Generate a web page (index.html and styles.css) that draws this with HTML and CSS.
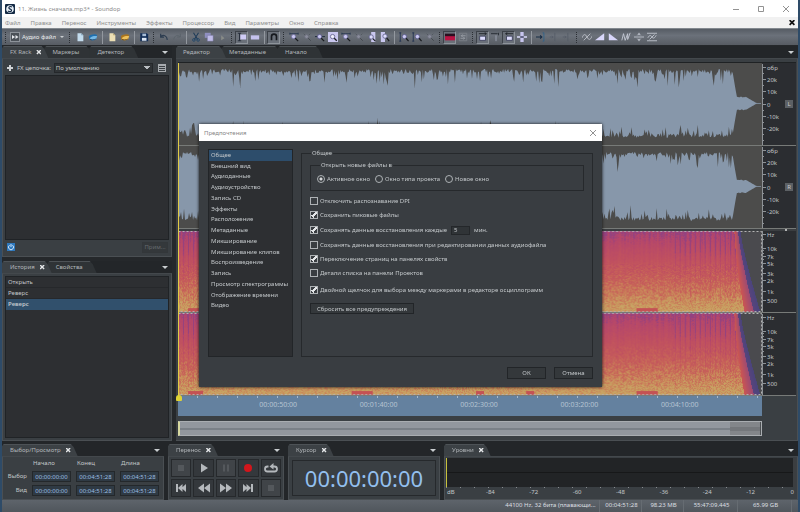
FILE: index.html
```html
<!DOCTYPE html>
<html lang="ru">
<head>
<meta charset="utf-8">
<title>11. Жизнь сначала.mp3* - Soundop</title>
<link rel="stylesheet" href="styles.css">
</head>
<body>
<svg class="sprite" aria-hidden="true">
  <symbol id="i-new" viewBox="0 0 12 12"><path d="M3 1.500h4.500L10 4v7H3z" fill="#c3dcee"/><path d="M7.500 1.500V4H10z" fill="#7f9db3"/></symbol>
  <symbol id="i-open" viewBox="0 0 12 12"><path d="M1 5c2-2 8-3 10-1.500L9.500 9C7 10.500 3 10 1.500 9z" fill="#1f6fae"/><path d="M2 7.500C4 5 8 4.500 11 5L9.500 9c-2 1.200-5 1.200-7.500 0z" fill="#74b7e4"/><path d="M2 8.500c2 1.200 5 1.200 7.500 0" stroke="#123a60" fill="none"/></symbol>
  <symbol id="i-newp" viewBox="0 0 12 12"><path d="M3 1.500h4.500L10 4v7H3z" fill="#ecdfb4"/><path d="M7.500 1.500V4H10z" fill="#ad9b66"/></symbol>
  <symbol id="i-openp" viewBox="0 0 12 12"><path d="M1 5c2-2 8-3 10-1.500L9.500 9C7 10.500 3 10 1.500 9z" fill="#a87420"/><path d="M2 7.500C4 5 8 4.500 11 5L9.500 9c-2 1.200-5 1.200-7.500 0z" fill="#eec05a"/><path d="M2 8.500c2 1.200 5 1.200 7.500 0" stroke="#5b3d12" fill="none"/></symbol>
  <symbol id="i-save" viewBox="0 0 12 12"><path d="M1.500 1.500h8l1.500 1.500v8H1.500z" fill="#122e57"/><path d="M4 2h4.500v3H4z" fill="#a8bdd6"/><path d="M3.500 7h5.500v3.500H3.500z" fill="#dce6f2"/></symbol>
  <symbol id="i-undo" viewBox="0 0 12 12"><path d="M2 2v4h4M2.500 5.500C5 3 9.500 4 10 9.500" stroke="#2d3d50" stroke-width="1.500" fill="none"/></symbol>
  <symbol id="i-redo" viewBox="0 0 12 12"><path d="M10 2v4H6M9.500 5.500C7 3 3 4 2 9" stroke="#596169" fill="none"/></symbol>
  <symbol id="i-cut" viewBox="0 0 12 12"><path d="M3 1l5 8M9 1L4 9" stroke="#1f3b58" stroke-width="1.300"/><circle cx="3.500" cy="9.500" r="1.600" fill="none" stroke="#1c4368"/><circle cx="8.500" cy="9.500" r="1.600" fill="none" stroke="#1c4368"/></symbol>
  <symbol id="i-copy" viewBox="0 0 12 12"><path d="M1 1h7v6H1z" fill="#8f8fc0"/><path d="M4 4h7v7H4z" fill="#bfbce8" stroke="#6a6a96" stroke-width=".5"/></symbol>
  <symbol id="i-paste" viewBox="0 0 12 12"><path d="M5 4l4 3.500L5 10z" fill="#898c88"/></symbol>
  <symbol id="i-range" viewBox="0 0 12 12"><path d="M1 1.500h4M3 1.500v9M1 10.500h4" stroke="#1b2230" fill="none"/><path d="M4 3h7v6H4z" fill="#cfccf6"/></symbol>
  <symbol id="i-block" viewBox="0 0 12 12"><path d="M1 4h10v5H1z" fill="#c4c2ee"/></symbol>
  <symbol id="i-magnet" viewBox="0 0 12 12"><path d="M3 10V5.500a3 3 0 0 1 6 0V10" stroke="#16191e" stroke-width="2" fill="none"/></symbol>
  <symbol id="i-zoom" viewBox="0 0 12 12"><path d="M1 2h10M1 .800v2.400M11 .800v2.400" stroke="#26364e"/><circle cx="5.500" cy="5.500" r="2.600" fill="#c9c7ef" stroke="#6c6c9c"/><path d="M7.500 7.500L11 11" stroke="#17191d" stroke-width="1.400"/></symbol>
  <symbol id="i-zoomh" viewBox="0 0 12 12"><path d="M0 5.500h12" stroke="#222d40" stroke-width="1.200"/><circle cx="5.500" cy="5.500" r="2.600" fill="#c9c7ef" stroke="#5c5c8c"/><path d="M7.500 7.500L11 11" stroke="#17191d" stroke-width="1.400"/></symbol>
  <symbol id="i-zoomsel" viewBox="0 0 12 12"><path d="M0 0h12v12H0z" fill="#c9c7ef"/><circle cx="5.500" cy="5.500" r="2.600" fill="#eeeefc" stroke="#5f5f8c"/><path d="M7.500 7.500L10.500 10.500" stroke="#17191d" stroke-width="1.400"/></symbol>
  <symbol id="i-zooml" viewBox="0 0 12 12"><path d="M5 0h5v12H5z" fill="#c9c7ef"/><circle cx="5" cy="6" r="2.600" fill="#dcdcfa" stroke="#5f5f8c"/><path d="M7 8l3 3" stroke="#17191d" stroke-width="1.400"/></symbol>
  <symbol id="i-zoomr" viewBox="0 0 12 12"><path d="M1 0h5v12H1z" fill="#c9c7ef"/><circle cx="6" cy="5" r="2.600" fill="#dcdcfa" stroke="#5f5f8c"/><path d="M8 7l3 4" stroke="#17191d" stroke-width="1.400"/></symbol>
  <symbol id="i-zoomv" viewBox="0 0 12 12"><path d="M1.500 1v10M.300 1h2.400M.300 11h2.400" stroke="#1d2e4d"/><circle cx="6.500" cy="5.500" r="2.600" fill="#c9c7ef" stroke="#5c5c8c"/><path d="M8.500 7.500L11.500 11" stroke="#17191d" stroke-width="1.400"/></symbol>
  <symbol id="i-zoomoff" viewBox="0 0 12 12"><path d="M2 2l2 2M10 2L8 4" stroke="#51575e"/><circle cx="5.500" cy="5.500" r="2.300" fill="#8a8d9c" stroke="#6b6e7c"/><path d="M7.500 7.500L10.500 10.500" stroke="#43484f" stroke-width="1.200"/></symbol>
  <symbol id="i-spec" viewBox="0 0 12 12"><path d="M0 2h12v4H0z" fill="#2a1020"/><path d="M0 5h12v5H0z" fill="#b81443"/></symbol>
  <symbol id="i-swap" viewBox="0 0 12 12"><path d="M1.500 1.500h9v9h-9z" fill="none" stroke="#7d828a"/><path d="M9 4.500H4M5.500 3L4 4.500 5.500 6M3 7.500h5M6.500 6L8 7.500 6.500 9" stroke="#9ea2aa" fill="none"/></symbol>
  <symbol id="i-boxr" viewBox="0 0 12 12"><path d="M1 2h9M8 .500L10 2 8 3.500" stroke="#1a1e24" fill="none"/><path d="M2 5h7v5H2z" fill="#dcdcfc" stroke="#363a55"/></symbol>
  <symbol id="i-boxl" viewBox="0 0 12 12"><path d="M11 2H2M4 .500L2 2l2 1.500" stroke="#1a1e24" fill="none"/><path d="M3 5h7v5H3z" fill="#dcdcfc" stroke="#363a55"/></symbol>
  <symbol id="i-tee" viewBox="0 0 12 12"><path d="M0 2h8M9 1v3" stroke="#20252d" fill="none"/><path d="M6 4v7" stroke="#a3a9ba"/></symbol>
  <symbol id="i-cross" viewBox="0 0 12 12"><path d="M4 0h4v12H4z" fill="#c7c5ee"/><path d="M0 6h4M8 6h4" stroke="#dcdcfc" stroke-width="2"/><path d="M4 6h4" stroke="#252b45" stroke-width="1.500"/></symbol>
  <symbol id="i-toend" viewBox="0 0 12 12"><path d="M0 6h7M5 4l2 2-2 2" stroke="#172c44" stroke-width="1.300" fill="none"/><path d="M8 1h1.500v10H8" stroke="#2c618b" fill="none"/></symbol>
  <symbol id="i-dim" viewBox="0 0 12 12"><path d="M1 6h4M3.500 4.500L5 6 3.500 7.500M7 1v10" stroke="#555c68" fill="none"/></symbol>
  <symbol id="i-wavy" viewBox="0 0 12 12"><path d="M0 7c2-5 4-5 6-1s4 4 6-1M2 10l8-8" stroke="#c4c8d0" fill="none"/></symbol>
  <symbol id="i-fin" viewBox="0 0 12 12"><path d="M0 10L11 1.500V10z" fill="#d8d6fa"/></symbol>
  <symbol id="i-fout" viewBox="0 0 12 12"><path d="M1 1.500L12 10H1z" fill="#d8d6fa"/></symbol>
  <symbol id="i-nn" viewBox="0 0 12 12"><path d="M1 10l2-8 2 8 3-8 0 7 3-8" stroke="#c4c8d4" stroke-width="1.100" fill="none"/></symbol>
  <symbol id="i-plusm" viewBox="0 0 12 12"><path d="M0 6h12M6 1v3M6 8v3M4 4l2-2 2 2M4 8l2 2 2-2" stroke="#c8ccd6" fill="none"/></symbol>
  <symbol id="i-norm" viewBox="0 0 12 12"><path d="M0 1.500h12M0 10.500h12M1 7c2-4 4-3 5-1s3 2 5-2M3 9l6-6" stroke="#c8ccd6" fill="none"/></symbol>
</svg>

<div class="app">
  <header class="titlebar">
    <svg class="logo" viewBox="0 0 10 10"><rect width="10" height="10" rx="1" fill="#142a44"/><circle cx="5" cy="5" r="3.800" fill="#e6eef5"/><path d="M7 3C5 1.800 3.500 3 4 4.200s3 .800 2.500 2.400S4 7.800 3 7" fill="none" stroke="#142a44" stroke-width="1.200"/></svg>
    <span class="title">11. Жизнь сначала.mp3* - Soundop</span>
    <div class="winbtns">
      <button aria-label="Свернуть"><svg viewBox="0 0 8 8"><path d="M1 4.500h6"/></svg></button>
      <button aria-label="Развернуть"><svg viewBox="0 0 8 8"><path d="M1.500 1.500h5v5h-5z"/></svg></button>
      <button aria-label="Закрыть"><svg viewBox="0 0 8 8"><path d="M1 1l6 6M7 1L1 7"/></svg></button>
    </div>
  </header>
  <nav class="menubar">
    <a href="#">Файл</a><a href="#">Правка</a><a href="#">Перенос</a><a href="#">Инструменты</a><a href="#">Эффекты</a><a href="#">Процессор</a><a href="#">Вид</a><a href="#">Параметры</a><a href="#">Окно</a><a href="#">Справка</a>
    <button class="docclose" aria-label="Закрыть документ"><i class="x"></i></button>
  </nav>
  <div class="toolbar" id="toolbar">
    <i class="grip"></i>
    <button class="mode"><svg viewBox="0 0 10 10"><rect x=".500" y=".500" width="9" height="9" fill="#4b5158" stroke="#8d939a"/><path d="M2 3l3 2-3 2zM5.500 3l3 2-3 2z" fill="#e7eaee"/></svg>Аудио файл<b class="caret"></b></button>
  </div>

  <main class="work">
    <aside class="side">
      <section class="panel rack">
        <div class="tabs"><button class="tab on">FX Rack<i class="x"></i></button><button class="tab">Маркеры</button><button class="tab">Детектор</button><b class="caret"></b></div>
        <div class="body">
          <div class="chain">
            <button class="plus" aria-label="Добавить"></button>
            <label for="chain">FX цепочка:</label>
            <select id="chain"><option>По умолчанию</option></select>
            <button class="lines" aria-label="Список"></button>
          </div>
          <div class="well"></div>
          <div class="foot">
            <button class="power" aria-label="Питание"><svg viewBox="0 0 8 8"><path d="M2.500 2.200a2.500 2.500 0 1 0 3 0M4 1v3" fill="none" stroke="#cfe4f8"/></svg></button>
            <button class="btn apply" disabled>Прим...</button>
          </div>
        </div>
      </section>
      <section class="panel history">
        <div class="tabs"><button class="tab on">История<i class="x"></i></button><button class="tab">Свойства</button><b class="caret"></b></div>
        <div class="body"><ul class="log"><li>Открыть</li><li>Реверс</li><li class="sel">Реверс</li></ul></div>
      </section>
    </aside>

    <section class="panel editor">
      <div class="tabs"><button class="tab on wide">Редактор</button><button class="tab wide">Метаданные</button><button class="tab wide">Начало</button><b class="caret"></b></div>
      <div class="body">
        <div class="tracks">
          <div class="track"><svg class="wave" viewBox="0 0 582 83" preserveAspectRatio="none"></svg><div class="axis"><svg class="amp"></svg><span class="chan">L</span></div></div>
          <div class="track"><svg class="wave" viewBox="0 0 582 83" preserveAspectRatio="none"></svg><div class="axis"><svg class="amp"></svg><span class="chan">R</span></div></div>
          <div class="split"><i></i></div>
          <div class="track"><canvas class="spec" width="582" height="83"></canvas><div class="axis"><svg class="freq"></svg></div></div>
          <div class="track"><canvas class="spec" width="582" height="83"></canvas><div class="axis"><svg class="freq"></svg></div></div>
          <i class="playhead"></i>
        </div>
        <div class="ruler"><span>00:00:50:00</span><span>00:01:40:00</span><span>00:02:30:00</span><span>00:03:20:00</span><span>00:04:10:00</span></div>
        <div class="overview"><i></i></div>
      </div>
    </section>
  </main>

  <div class="dock">
    <section class="panel selection">
      <div class="tabs"><button class="tab on">Выбор/Просмотр<i class="x"></i></button><b class="caret"></b></div>
      <div class="body times">
        <span></span><span>Начало</span><span>Конец</span><span>Длина</span>
        <label for="s1">Выбор</label><input id="s1" value="00:00:00:00"><input aria-label="Выбор, конец" value="00:04:51:28"><input aria-label="Выбор, длина" value="00:04:51:28">
        <label for="v1">Вид</label><input id="v1" value="00:00:00:00"><input aria-label="Вид, конец" value="00:04:51:28"><input aria-label="Вид, длина" value="00:04:51:28">
      </div>
    </section>
    <section class="panel transport">
      <div class="tabs"><button class="tab on">Перенос<i class="x"></i></button><b class="caret"></b></div>
      <div class="body keys">
        <button class="off" aria-label="Стоп"><svg viewBox="0 0 14 12"><path d="M4 3h6v6H4z"/></svg></button>
        <button aria-label="Играть"><svg viewBox="0 0 14 12"><path d="M4 1.500L11 6l-7 4.500z"/></svg></button>
        <button class="off" aria-label="Пауза"><svg viewBox="0 0 14 12"><path d="M4 2.500h2v7H4zM8 2.500h2v7H8z"/></svg></button>
        <button aria-label="Запись"><svg viewBox="0 0 14 12"><circle cx="7" cy="6" r="4" fill="#d2161c"/></svg></button>
        <button aria-label="Цикл"><svg viewBox="0 0 14 12"><path d="M4.500 4.500H3.500a2.300 2.300 0 0 0 0 5h7a2.300 2.300 0 0 0 0-5H8" fill="none" stroke="#b4b8bc" stroke-width="1.800"/><path d="M9.500 1v6.500L5.500 4.500z"/></svg></button>
        <button aria-label="В начало"><svg viewBox="0 0 14 12"><path d="M2 2h2v8H2zM8.500 2v8L4 6zM12 2v8L7.500 6z"/></svg></button>
        <button aria-label="Назад"><svg viewBox="0 0 14 12"><path d="M7 1.500v9L1 6zM13 1.500v9L7 6z"/></svg></button>
        <button aria-label="Вперёд"><svg viewBox="0 0 14 12"><path d="M1 1.500v9L7 6zM7 1.500v9L13 6z"/></svg></button>
        <button aria-label="В конец"><svg viewBox="0 0 14 12"><path d="M10 2h2v8h-2zM5.500 2v8L10 6zM2 2v8l4.500-4z"/></svg></button>
        <button class="off" aria-label="Клип"><svg viewBox="0 0 14 12"><path d="M4 3h6v6H4z"/></svg></button>
      </div>
    </section>
    <section class="panel cursor">
      <div class="tabs"><button class="tab on">Курсор<i class="x"></i></button><b class="caret"></b></div>
      <div class="body"><output class="clock">00:00:00:00</output></div>
    </section>
    <section class="panel levels">
      <div class="tabs"><button class="tab on">Уровни<i class="x"></i></button><b class="caret"></b></div>
      <div class="body"><div class="meter"><i></i></div><div class="db"><span>dB</span><span>-84</span><span>-72</span><span>-60</span><span>-48</span><span>-36</span><span>-24</span><span>-12</span><span>0</span></div></div>
    </section>
  </div>

  <footer class="status"><span class="fmt">44100 Hz, 32 бита (плавающи...</span><span>00:04:51:28</span><span>98.23 MB</span><span class="wide">55:47:09.445</span><span class="wide">65.99 GB</span></footer>
</div>

<div class="dialog" role="dialog" aria-labelledby="dlg">
  <header><span id="dlg">Предпочтения</span><button aria-label="Закрыть"><svg viewBox="0 0 8 8"><path d="M1 1l6 6M7 1L1 7"/></svg></button></header>
  <div class="content">
    <ul class="pages"><li class="sel">Общее</li><li>Внешний вид</li><li>Аудиоданные</li><li>Аудиоустройство</li><li>Запись CD</li><li>Эффекты</li><li>Расположение</li><li>Метаданные</li><li>Микширование</li><li>Микширование клипов</li><li>Воспроизведение</li><li>Запись</li><li>Просмотр спектрограммы</li><li>Отображение времени</li><li>Видео</li></ul>
    <fieldset class="general">
      <legend>Общее</legend>
      <fieldset class="openin">
        <legend>Открыть новые файлы в</legend>
        <label><input type="radio" name="open" checked>Активное окно</label>
        <label><input type="radio" name="open">Окно типа проекта</label>
        <label><input type="radio" name="open">Новое окно</label>
      </fieldset>
      <div class="opts">
        <label><input type="checkbox">Отключить распознавание DPI</label>
        <label><input type="checkbox" checked>Сохранить пиковые файлы</label>
        <div class="every"><label><input type="checkbox" checked>Сохранять данные восстановления каждые</label><input class="num" aria-label="Минуты" value="5"><span>мин.</span></div>
        <label><input type="checkbox">Сохранять данные восстановления при редактировании данных аудиофайла</label>
        <label><input type="checkbox" checked>Переключение страниц на панелях свойств</label>
        <label><input type="checkbox">Детали списка на панели Проектов</label>
        <label class="apart"><input type="checkbox" checked>Двойной щелчок для выбора между маркерами в редакторе осциллограмм</label>
      </div>
      <button class="btn reset">Сбросить все предупреждения</button>
    </fieldset>
  </div>
  <div class="actions"><button class="btn">ОК</button><button class="btn">Отмена</button></div>
</div>
<script src="script.js"></script>
</body>
</html>
```
FILE: styles.css
```css
* { box-sizing: border-box; }
body { margin: 0; font: 6px/10px "Noto Sans", sans-serif; color: #c3c7ca; background: #2e4b68; }
button, input, select { font: inherit; color: inherit; margin: 0; padding: 0; border: 0; border-radius: 0; background: none; white-space: nowrap; }
ul { list-style: none; margin: 0; padding: 0; }
a { color: inherit; text-decoration: none; }
.sprite { position: absolute; width: 0; height: 0; }
.app { display: flex; flex-direction: column; min-height: 100vh; margin: 0 2px; background: #25282b; }

.titlebar { display: flex; align-items: center; height: 17px; padding: 0 3px; gap: 3px; background: #fff; color: #8c8c8c; }
.logo { width: 10px; height: 10px; }
.winbtns { display: flex; margin-left: auto; gap: 13px; padding-right: 3px; }
.winbtns button, .dialog header button { width: 12px; height: 12px; display: grid; place-items: center; }
.winbtns svg, .dialog header svg { width: 8px; height: 8px; fill: none; stroke: #929292; }
.menubar { display: flex; align-items: center; height: 11px; gap: 10px; padding: 0 2px 0 3px; background: #f1f1f1; color: #8f8f8f; }
.docclose { margin-left: auto; width: 8px; height: 8px; display: grid; place-items: center; color: #111; }
.toolbar { display: flex; align-items: center; height: 17px; background: linear-gradient(#565c64, #6b717a 40%, #575c63); border-top: 1px solid #83898f; }
.toolbar button { flex: none; width: 13px; height: 13px; display: grid; place-items: center; border: 1px solid transparent; }
.toolbar button svg { width: 10px; height: 10px; }
.toolbar button.on { border-color: #3c4148 #8e949b #8e949b #3c4148; background: #6a7079; }
.toolbar .mode { display: flex; align-items: center; width: 57px; gap: 2px; color: #e8eaed; }
.toolbar .mode .caret { margin: 0 1px 0 auto; }
.grip { flex: none; width: 7px; height: 11px; background: repeating-linear-gradient(#2b2f34 0 1px, transparent 1px 2px) center / 1px 100% no-repeat; }
.sep { flex: none; width: 6px; height: 13px; background: linear-gradient(#93989f, #93989f) center / 1px 100% no-repeat; }

.caret { width: 6px; height: 3px; background: #c9cdd0; clip-path: polygon(0 0, 100% 0, 50% 100%); }
.toolbar .caret { width: 4px; height: 2px; }
.panel { display: flex; flex-direction: column; min-width: 0; }
.tabs { display: flex; align-items: stretch; height: 12px; background: #232629; flex: none; }
.tab { position: relative; z-index: 0; display: flex; align-items: center; gap: 5px; padding: 0 10px 0 8px; color: #b3b7ba; }
.tab.wide { padding: 0 12px 0 7px; }
.tab::before { content: ""; position: absolute; z-index: -1; inset: 0 -4px 0 0; background: #2f3336; border-top: 1px solid #4d5256; clip-path: polygon(0 2px, 2px 0, calc(100% - 7px) 0, calc(100% - 4px) 3px, 100% 100%, 0 100%); }
.tab.on { z-index: 2; }
.tab.on::before { background: #3c4145; }
.tab:has(.x) { padding-right: 3px; }
.x { width: 5px; height: 5px; background: #e4e6e8; clip-path: polygon(20% 0, 50% 30%, 80% 0, 100% 20%, 70% 50%, 100% 80%, 80% 100%, 50% 70%, 20% 100%, 0 80%, 30% 50%, 0 20%); }
.docclose .x { background: #111; width: 6px; height: 6px; }
.tabs > .caret { margin: 5px 4px 0 auto; }
.body { flex: 1; padding: 2px; background: #3a3f43; border: 1px solid #4a4f53; border-top-color: #43484c; }
.btn { height: 11px; border: 1px solid #222528; background: #34383b; color: #c3c7ca; line-height: 8px; }

.work { flex: 1; display: grid; grid-template-columns: 170px 1fr; gap: 4px; padding-top: 1px; }
.side { display: flex; flex-direction: column; gap: 4px; }
.rack { height: 211px; }
.rack .body { display: flex; flex-direction: column; }
.history { flex: 1; }
.chain { display: flex; align-items: center; gap: 3px; height: 13px; padding: 0 1px; }
.plus { width: 8px; height: 8px; background: linear-gradient(#d0d3d6, #d0d3d6) center / 6px 2px no-repeat, linear-gradient(#d0d3d6, #d0d3d6) center / 2px 6px no-repeat; }
.chain select { flex: 1; min-width: 0; height: 10px; padding-left: 1px; appearance: none; border: 1px solid #25282b; background: linear-gradient(45deg, transparent 50%, #b9bdc1 50%) right 5px center / 3px 4px no-repeat, linear-gradient(-45deg, transparent 50%, #b9bdc1 50%) right 2px center / 3px 4px no-repeat, #303437; line-height: 8px; }
.lines { width: 8px; height: 8px; border: 1px solid #a7abaf; background: repeating-linear-gradient(#a7abaf 0 1px, #3a3f43 1px 2px); margin: 0 2px; }
.well { flex: 1; margin-top: 1px; border: 1px solid #202326; background: #2d2f32; }
.foot { display: flex; align-items: center; justify-content: space-between; height: 14px; padding: 0 1px 0 2px; }
.power { width: 8px; height: 8px; background: #2e78bd; display: grid; }
.power svg { width: 8px; height: 8px; }
.apply { width: 26px; color: #666b6f; border-color: #33373a; }
.log { height: 100%; border: 1px solid #202326; background: #2d2f32; }
.log li { height: 11px; padding-left: 2px; border-bottom: 1px solid #26282b; }
.log .sel { background: #31506c; font-weight: 600; color: #c3c8cc; border-color: #31506c; }

.editor .body { display: flex; flex-direction: column; padding: 3px 1px 4px 0; border-left: 0; }
.tracks { position: relative; flex: 1; display: flex; flex-direction: column; background: #4c4c4b; border-top: 1px solid #1f2224; margin-left: 2px; }
.track { flex: 1; display: flex; min-height: 0; border-bottom: 1px solid #777a78; }
.wave, .spec { display: block; flex: 1; min-width: 0; align-self: stretch; contain: size; }
.axis { width: 34px; flex: none; display: flex; align-items: center; justify-content: space-between; padding-right: 3px; background: #2b2d31; overflow: hidden; }
.axis svg { width: 22px; height: 80px; overflow: visible; flex: none; }
.axis text { font-size: 6px; fill: #c0c4c7; }
.axis line { stroke: #8e9296; }
.chan { width: 8px; height: 8px; line-height: 8px; text-align: center; background: #5c6064; color: #c8cbce; }
.split { height: 2px; background: #3b3e41; display: flex; justify-content: flex-end; padding-right: 9px; }
.split i { width: 2px; height: 2px; background: #ddd; border-radius: 1px; }
.playhead { position: absolute; left: 0; top: 0; bottom: 0; width: 1px; background: #e0cb45; }
.playhead::after { content: ""; position: absolute; left: -2px; bottom: -5px; width: 6px; height: 6px; border-radius: 3px 3px 1px 1px; background: #dfd334; z-index: 1; }
.ruler { display: flex; height: 20px; margin: 0 34px 0 2px; padding-left: 50px; color: #b6c4d2; font-size: 7px; line-height: 18px; background: repeating-linear-gradient(90deg, transparent 0 19px, #a5b8ca 19px 20px) 0 0 / 100% 2px no-repeat, #64819f; }
.ruler span { flex: 0 0 18.8%; text-align: center; }
.overview { height: 15px; margin: 5px 34px 0 2px; border: 1px solid #a9adb1; border-left: 2px solid #d7d9a0; background: linear-gradient(transparent 6px, #7a8087 6px 8px, transparent 8px), #92979e; display: flex; justify-content: flex-end; }
.overview i { width: 31px; background: linear-gradient(#83868a 5px, #74777b 5px 9px, #83868a 9px); border-right: 1px solid #4b4f52; }

.dock { display: grid; grid-template-columns: 162px 116px 152px 1fr; gap: 4px; padding-top: 3px; background: #232629; }
.dock .body { height: 43px; }
.times { display: grid; grid-template-columns: 23px repeat(3, 1fr); gap: 3px 5px; align-content: start; padding: 2px 4px 0 1px; }
.times span { padding-left: 1px; line-height: 9px; }
.times label { text-align: right; }
.times input { width: 100%; min-width: 0; height: 11px; border: 1px solid #24282b; background: #2f3a44; color: #9cbfe2; text-align: center; }
.keys { display: grid; grid-template-columns: repeat(5, 1fr); gap: 2px; }
.keys button { display: grid; place-items: center; border: 1px solid #26292c; background: #34383c; }
.keys svg { width: 14px; height: 12px; fill: #b4b8bc; }
.keys .off { background: #404448; }
.keys .off svg { fill: #54585c; }
.cursor .body { padding: 3px; }
.clock { display: grid; place-items: center; height: 100%; border: 1px solid #26292c; font-size: 22px; line-height: 30px; color: #93bfee; }
.levels .body { padding: 1px; }
.meter { height: 29px; display: flex; align-items: center; background: #222426; border-left: 1px solid #c8c13c; border-right: 3px solid #3b3e41; }
.meter i { flex: 1; height: 1px; background: #171819; }
.db { display: flex; line-height: 11px; background: repeating-linear-gradient(90deg, #8a8e92 0 1px, transparent 1px 14px) 0 0 / 100% 1px no-repeat; }
.db span { flex: 2 1 0; text-align: center; }
.db span:first-child { flex: 1 1 0; text-align: left; padding-left: 1px; }
.db span:last-child { flex: 1 1 0; text-align: right; padding-right: 2px; }
.status { display: flex; justify-content: flex-end; gap: 2px; height: 12px; padding-right: 6px; color: #dcdfe1; background: linear-gradient(#5e646b, #50565c); }
.status span { width: 40px; text-align: center; line-height: 11px; border-right: 1px solid #666c72; white-space: nowrap; }
.status .fmt { width: 98px; }
.status .wide { width: 52px; }

.dialog { position: absolute; left: 199px; top: 124px; width: 403px; height: 263px; display: flex; flex-direction: column; background: #393d41; box-shadow: 0 0 3px #111; }
.dialog header { display: flex; align-items: center; justify-content: space-between; height: 17px; padding: 0 3px 0 5px; background: #fff; color: #858585; }
.content { flex: 1; display: flex; gap: 8px; padding: 8px 9px 0; }
.pages { flex: none; width: 85px; height: 208px; padding-bottom: 45px; display: grid; grid-template-rows: repeat(15, 1fr); grid-template-columns: minmax(0, 1fr); border: 1px solid #222528; background: #2d2f32; white-space: nowrap; }
.pages li { padding-left: 2px; min-height: 0; }
.pages .sel { background: #2d4d6b; }
fieldset { margin: 0; min-width: 0; border: 1px solid #26292c; }
legend { padding: 0 1px; }
.general { flex: 1; height: 208px; padding: 2px 8px 0; }
.general > legend { margin-left: 1px; line-height: 9px; }
.openin { display: flex; gap: 5px; height: 31px; padding: 4px 6px 0; }
.openin legend { margin-left: 3px; }
.dialog label { display: flex; align-items: center; gap: 2px; white-space: nowrap; }
.openin label { height: 10px; }
[type=radio], [type=checkbox] { appearance: none; flex: none; width: 8px; height: 8px; border: 1px solid #aeb2b5; }
[type=radio] { border-radius: 50%; }
[type=radio]:checked { background: radial-gradient(#d8dadc 1px, transparent 2px); }
[type=checkbox]:checked { background: linear-gradient(-45deg, transparent 38%, #e4e6e8 38% 62%, transparent 62%) right 0 top 0 / 5px 5px no-repeat, linear-gradient(45deg, transparent 35%, #e4e6e8 35% 70%, transparent 70%) 0 3px / 3px 3px no-repeat; }
.opts { padding-top: 3px; }
.opts label { height: 14px; }
.every { display: flex; align-items: center; gap: 4px; height: 16px; }
.num { width: 19px; height: 9px; padding-left: 2px; border: 1px solid #24272a; background: #303437; }
.opts .apart { margin-top: 3px; }
.reset { margin-top: 6px; width: 104px; }
.actions { display: flex; justify-content: flex-end; gap: 8px; padding: 0 9px 8px; }
.actions .btn { width: 39px; height: 12px; }
```
FILE: script.js
```js
// Toolbar: "|" separator, ":" grip, trailing "*" marks a pressed button.
const tools = ': new open | newp openp | save : undo redo | cut copy paste : range* block | magnet* : zoom zoomoff zoomh zoomsel zoom zoomoff zooml zoomr | zoomv zoomv zoomoff : spec* swap : boxr* tee boxl* cross | toend dim dim : wavy fin fout nn plusm norm';
document.getElementById('toolbar').insertAdjacentHTML('beforeend', tools.split(' ').map(t => {
  if (t === '|') return '<i class="sep"></i>';
  if (t === ':') return '<i class="grip"></i>';
  const name = t.replace('*', '');
  return `<button class="${t.endsWith('*') ? 'on' : ''}" aria-label="${name}"><svg><use href="#i-${name}"/></svg></button>`;
}).join(''));

let seed = 7;
const rnd = () => (seed = (seed * 16807) % 2147483647) / 2147483647;

// Waveforms: dense peaks, then a short tail that fades to silence.
document.querySelectorAll('.wave').forEach(svg => {
  const edge = () => {
    const out = [];
    for (let x = 0; x < 582; x++) {
      let a;
      if (x < 4) a = 26 + rnd() * 6;
      else if (x < 553) a = 35 - rnd() * 4 - (rnd() < 0.42 ? rnd() * rnd() * 19 : 0);
      else if (x < 557) a = 30 - (x - 553) * 6;
      else if (x < 567) a = 6 + rnd();
      else a = Math.max(0.4, 6 - (x - 567) * 0.6);
      out.push(a);
    }
    return out;
  };
  const top = edge(), bottom = edge();
  const d = 'M0 41L' + top.map((a, x) => `${x} ${(41 - a).toFixed(1)}`).join('L') +
    'L' + bottom.map((a, x) => `${x} ${(41 + a).toFixed(1)}`).reverse().join('L') + 'Z';
  svg.innerHTML = `<rect width="582" height="83" fill="#4c4c4b"/><path d="${d}" fill="#8797aa"/>`;
});

// Spectrograms: colour runs from violet highs to yellow lows.
const stops = [[0, 148, 66, 128], [0.1, 180, 70, 108], [0.35, 192, 80, 96], [0.65, 200, 98, 88], [0.85, 202, 140, 90], [1, 200, 164, 100]];
const tint = v => {
  v = Math.min(1, Math.max(0, v));
  const i = Math.max(1, stops.findIndex(s => s[0] >= v));
  const a = stops[i - 1], b = stops[i], k = (v - a[0]) / (b[0] - a[0]);
  return [1, 2, 3].map(n => a[n] + (b[n] - a[n]) * k);
};
document.querySelectorAll('.spec').forEach(cv => {
  const ctx = cv.getContext('2d'), img = ctx.createImageData(582, 83);
  for (let x = 0; x < 582; x++) {
    const streak = x % 5 < 1 && (x > 490 || x < 20) ? -0.3 : (rnd() - 0.4) * 0.16;
    for (let y = 0; y < 83; y++) {
      const h = y / 83;
      let c = tint(h + (1 - h) * streak + (rnd() - 0.5) * (h > 0.4 ? 0.35 : 0.12));
      if (h > 0.94 && Math.sin(x / 9) + Math.sin(x / 23) > 1.3) c = [196, 82, 84];
      const limit = 560 + Math.pow(h, 1.2) * 20;
      const blur = 6 + h * 10;
      if (x > limit - blur) {
        const k = (x - limit + blur) / blur;
        if (k > 1) c = [74, 74, 78];
        else if (k > 0.6) c = [110 - 36 * k, 68, 124];
        else c = [204 - 80 * k, 86 - 20 * k, 82 + 55 * k];
      }
      const p = (y * 582 + x) * 4;
      img.data.set([c[0], c[1], c[2], 255], p);
    }
  }
  ctx.putImageData(img, 0, 0);
  ctx.strokeStyle = '#b4b4b4';
  ctx.setLineDash([2, 2]);
  ctx.strokeRect(0.5, 0.5, 581, 82);
});

// Scales: [label, y]
const scale = (sel, marks, minor) => document.querySelectorAll(sel).forEach(svg => {
  svg.innerHTML = '<line x1=".5" x2=".5" y1="0" y2="83"/>' +
    minor.map(y => `<line x1="0" x2="2" y1="${y}" y2="${y}"/>`).join('') +
    marks.map(([t, y]) => `<line x1="0" x2="4" y1="${y}" y2="${y}"/><text x="5" y="${y + 2}">${t}</text>`).join('');
});
scale('.amp', [['обр', 3.5], ['20k', 15.5], ['10k', 27.5], ['0', 40.5], ['-10k', 52.5], ['-20k', 64.5]], [9.5, 21.5, 34.5, 46.5, 58.5, 70.5, 76.5]);
scale('.freq', [['Hz', 3.5], ['10k', 17.5], ['7k', 25.5], ['5k', 32.5], ['3k', 42.5], ['2k', 49.5], ['1k', 60.5], ['500', 69.5]], [8.5, 19.5, 22.5, 28.5, 37.5]);
```
